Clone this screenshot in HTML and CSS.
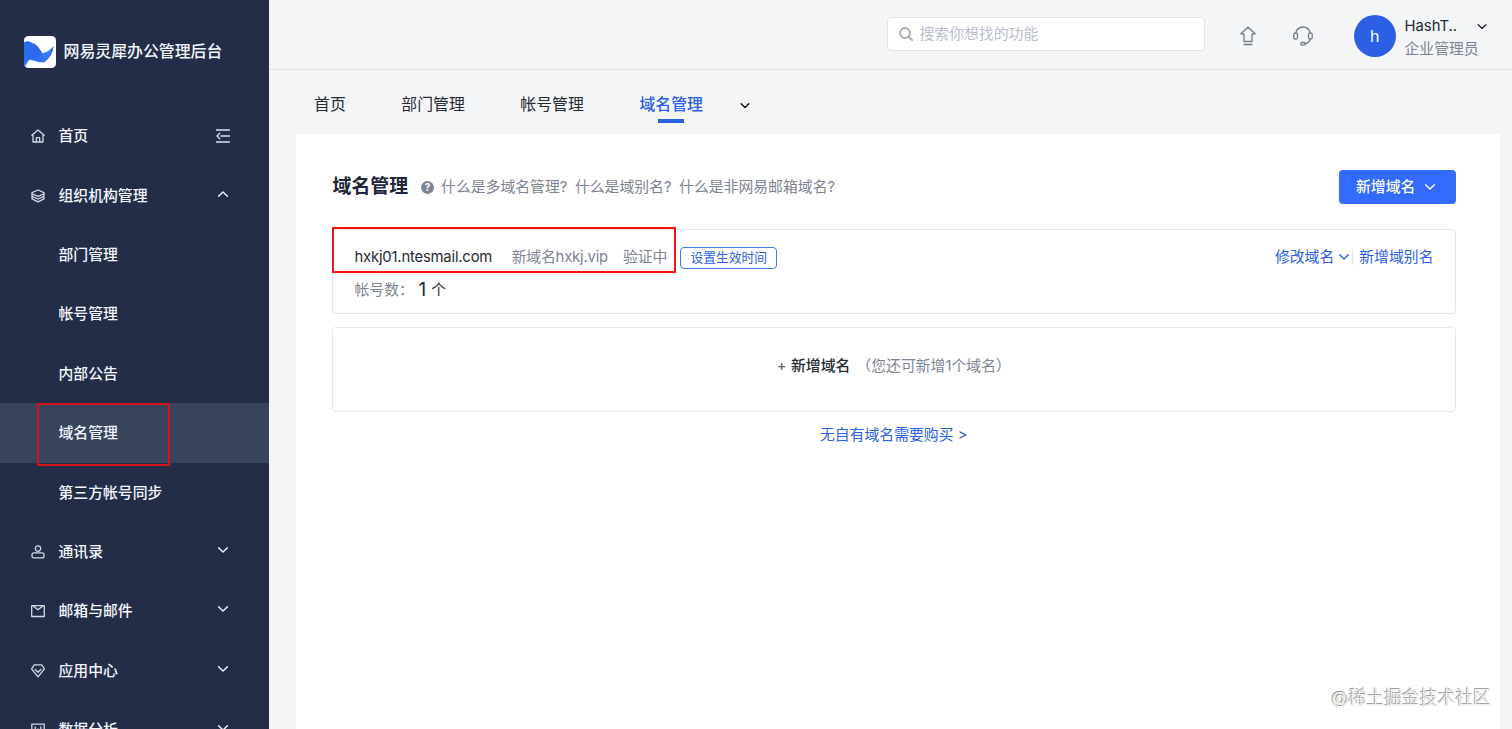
FILE: index.html
```html
<!DOCTYPE html>
<html lang="zh-CN">
<head>
    <meta charset="UTF-8">
    <meta name="viewport" content="width=device-width, initial-scale=1.0">
    <title>网易灵犀办公管理后台</title>
    <link rel="stylesheet" href="styles.css">
</head>
<body>
    <aside class="sidebar">
        <div class="brand">
            <svg class="logo" viewBox="0 0 32 32">
                <defs>
                    <linearGradient id="wing" x1="0" y1="0" x2="1" y2="1">
                        <stop offset="0" stop-color="#2458e0"/>
                        <stop offset="1" stop-color="#3b82ff"/>
                    </linearGradient>
                </defs>
                <rect width="32" height="32" rx="4.5" fill="#fff"/>
                <path d="M0 6.5Q2.5 4.5 5 5.5L11 8 6.500 23.5Q3 25 1.5 30.500L0 28z" fill="#2c6cf0"/>
                <path d="M10.500 7.800Q15 11 18.500 17.500L24 15.500 29.500 10.500Q28.500 20 20 26.500Q12 26 6 23.500z" fill="url(#wing)"/>
                <path d="M18.500 17.500L24 15.500 29.500 10.500Q28.500 20 20 26.500z" fill="#3478f8"/>
            </svg>
            <span>网易灵犀办公管理后台</span>
        </div>
        <nav class="menu">
            <a class="item">
                <svg class="icon" viewBox="0 0 14 14"><path d="M.8 6.200L7 1l6.200 5.200M2 5.400V13h10V5.400M5.300 13V9.300q0-.6.600-.6h2.200q.6 0 .6.600V13"/></svg>
                <span>首页</span>
                <svg class="fold" viewBox="0 0 14 14"><path d="M.5 1h13M5 7h8.500M.5 13h13M3.800 4.300L1 7l2.800 2.700"/></svg>
            </a>
            <a class="item">
                <svg class="icon" viewBox="0 0 14 14"><path d="M7 1l6 2.600v1.200L7 7.400 1 4.800V3.600zM1 5v2.300L7 10l6-2.700V5M1 7.500v2.400l6 2.900 6-2.900V7.500"/></svg>
                <span>组织机构管理</span>
                <svg class="arrow" viewBox="0 0 10 6"><path d="M.6 5.200L5 1l4.400 4.200"/></svg>
            </a>
            <a class="item sub">部门管理</a>
            <a class="item sub">帐号管理</a>
            <a class="item sub">内部公告</a>
            <a class="item sub active">域名管理<i class="mark"></i></a>
            <a class="item sub">第三方帐号同步</a>
            <a class="item">
                <svg class="icon" viewBox="0 0 14 14"><circle cx="7" cy="3.600" r="2.700"/><rect x="1" y="7.800" width="12" height="5" rx="1.900"/></svg>
                <span>通讯录</span>
                <svg class="arrow" viewBox="0 0 10 6"><path d="M.6.800L5 5 9.400.800"/></svg>
            </a>
            <a class="item">
                <svg class="icon" viewBox="0 0 14 14"><path d="M.7 1.700h12.600v10.800H.700zM2.500 2.200L7 5.700l4.500-3.500"/></svg>
                <span>邮箱与邮件</span>
                <svg class="arrow" viewBox="0 0 10 6"><path d="M.6.800L5 5 9.400.800"/></svg>
            </a>
            <a class="item">
                <svg class="icon" viewBox="0 0 14 14"><path d="M3.300.800h7.400l2.700 4L7 12.800.600 4.800zM4.200 5.500L7 8.300l2.800-2.800"/></svg>
                <span>应用中心</span>
                <svg class="arrow" viewBox="0 0 10 6"><path d="M.6.800L5 5 9.400.800"/></svg>
            </a>
            <a class="item">
                <svg class="icon" viewBox="0 0 14 14"><path d="M.8 1.200h12.400v11.500H.800zM4.200 4v6M7 6v4M9.800 4v6"/></svg>
                <span>数据分析</span>
                <svg class="arrow" viewBox="0 0 10 6"><path d="M.6.800L5 5 9.400.800"/></svg>
            </a>
        </nav>
    </aside>

    <div class="page">
        <header class="topbar">
            <div class="search">
                <svg viewBox="0 0 14 14"><circle cx="6" cy="6" r="4.900"/><path d="M9.600 9.600l3.700 3.600"/></svg>
                <span>搜索你想找的功能</span>
            </div>
            <svg class="tool upload" viewBox="0 0 16 20"><path d="M8 1.200L15.200 7.800H12v7.700H4V7.800H.800zM4 18.500h8"/></svg>
            <svg class="tool service" viewBox="0 0 20 20"><path d="M2.800 7Q4.300 1 10 1t7.200 6M17.200 13Q16 17 12.300 17.800"/><rect x=".8" y="6.800" width="3.700" height="6.400" rx="1.800"/><rect x="15.500" y="6.800" width="3.700" height="6.400" rx="1.800"/><rect x="7.800" y="16.500" width="4.500" height="2.600" rx="1.300"/></svg>
            <div class="avatar">h</div>
            <div class="user">
                <div class="name">HashT..<svg class="arrow" viewBox="0 0 10 6"><path d="M1.200.800L5 4.600 8.800.800"/></svg></div>
                <div class="role">企业管理员</div>
            </div>
        </header>

        <div class="tabs">
            <a>首页</a>
            <a>部门管理</a>
            <a>帐号管理</a>
            <a class="current">域名管理</a>
            <svg class="arrow" viewBox="0 0 10 6"><path d="M1.200.800L5 4.600 8.800.800"/></svg>
        </div>

        <main class="content">
            <div class="title-row">
                <h1>域名管理</h1>
                <span class="help">?</span>
                <div class="faq"><a>什么是多域名管理?</a><a>什么是域别名?</a><a>什么是非网易邮箱域名?</a></div>
                <button class="add-btn">新增域名<svg class="arrow" viewBox="0 0 10 6"><path d="M.6.800L5 5 9.400.800"/></svg></button>
            </div>

            <section class="card domain">
                <i class="mark"></i>
                <div class="line">
                    <span class="host">hxkj01.ntesmail.com</span>
                    <span class="pending">新域名hxkj.vip</span>
                    <span class="status">验证中</span>
                    <span class="tag">设置生效时间</span>
                    <div class="ops">
                        <a>修改域名<svg class="arrow" viewBox="0 0 10 6"><path d="M.6.800L5 5 9.400.800"/></svg></a>
                        <a>新增域别名</a>
                    </div>
                </div>
                <div class="count"><span>帐号数：</span><b>1</b>个</div>
            </section>

            <section class="card add">
                <span class="plus">+</span>
                <span class="label">新增域名</span>
                <span class="tip">（您还可新增1个域名）</span>
            </section>

            <a class="buy">无自有域名需要购买 &gt;</a>
        </main>
    </div>
    <div class="watermark">@稀土掘金技术社区</div>
</body>
</html>
```

FILE: styles.css
```css
* {box-sizing: border-box;}
body {
    margin: 0;
    display: flex;
    height: 100vh;
    overflow: hidden;
    background: #f4f5f7;
    color: #262a33;
    font-family: Inter, "Noto Sans CJK SC", sans-serif;
    font-size: 14.85px;
    line-height: 22px;
    white-space: nowrap;
}
svg {display: block; flex: none; fill: none; stroke: currentColor; stroke-linecap: round; stroke-linejoin: round;}
h1 {margin: 0;}
.arrow {width: 10px; height: 6px; stroke-width: 1.4;}
.mark {position: absolute; border: 2px solid #f01414; z-index: 1;}

/* sidebar */
.sidebar {width: 268.5px; flex: none; height: 100vh; overflow: hidden; background: #232d47; color: #f4f7ff;}
.brand {display: flex; align-items: center; gap: 7.5px; height: 106.5px; padding: 0 0 3px 24px; font-size: 15.9px; font-weight: 500;}
.logo {width: 32px; height: 32px; stroke: none;}
.menu {font-weight: 500;}
.item {position: relative; display: flex; align-items: center; height: 59.4px; padding: 0 38px 0 31px;}
.item span {flex: 1;}
.item.sub {padding-left: 58.5px;}
.item.active {background: #38445c;}
.item .icon {width: 14px; height: 14px; margin-right: 13.5px; color: #d3d9e6; stroke-width: 1.3;}
.item .fold {width: 14px; height: 14px; margin-right: 1px; color: #dce2f0; stroke-width: 1.3;}
.item .arrow {margin: 0 2.5px 4px 0;}
.item .mark {left: 37px; top: 0; width: 132.5px; height: 63px; border-color: #d3141c;}

/* top bar */
.page {flex: 1; display: flex; flex-direction: column; min-width: 0;}
.topbar {display: flex; align-items: center; justify-content: flex-end; height: 70px; padding-right: 25.5px; border-bottom: 1px solid #e1e3e6;}
.search {display: flex; align-items: center; gap: 7px; width: 318px; height: 34px; margin: 0 35px 2px 0; padding-left: 11px; background: #fff; border: 1px solid #e2e4e9; border-radius: 4px; color: #b9bdcc;}
.search svg {width: 14px; height: 14px; color: #aeaeae; stroke-width: 2;}
.tool {color: #747a88; stroke-width: 1.3; margin-top: 2px;}
.upload {width: 16px; height: 20px; margin-right: 37px;}
.service {width: 20px; height: 20px; margin-right: 41px;}
.avatar {width: 42.5px; height: 42.5px; margin: 3px 8.5px 0 0; border-radius: 50%; background: #2b60e4; color: #fff; font-size: 16px; line-height: 43px; text-align: center;}
.user {width: 82px; margin-top: 4px;}
.name {display: flex; align-items: center; justify-content: space-between;}
.name .arrow {margin-top: 2px;}
.role {padding-top: 1px; margin-bottom: -1px; color: #7d8391;}

/* tabs */
.tabs {display: flex; align-items: center; gap: 55.5px; height: 64px; padding: 5px 0 0 45.5px; font-size: 15.9px;}
.tabs a {position: relative; height: 24px; line-height: 24px;}
.tabs .current {color: #2b60e4; font-weight: 500;}
.tabs .current::after {content: ""; position: absolute; left: 19px; bottom: -6px; width: 26px; height: 4px; background: #2b60e4;}
.tabs .arrow {margin: 2px 0 0 -18px; color: #111;}

/* content */
.content {flex: 1; margin: 0 12px 0 27px; padding: 36px 44.5px 0 36.5px; background: #fff;}
.title-row {display: flex; align-items: center; height: 34px; padding-left: .5px;}
.title-row h1 {font-size: 18.9px; font-weight: 700; color: #20263a;}
.help {width: 13px; height: 13px; margin: 0 7px 0 13px; border-radius: 50%; background: #7e8494; color: #fff; font-size: 10px; font-weight: 700; line-height: 13px; text-align: center;}
.faq {display: flex; gap: 7.5px; color: #7d8391;}
.add-btn {display: flex; align-items: center; gap: 10px; width: 117px; height: 34px; margin-left: auto; padding: 0 0 0 17.5px; border: 0; border-radius: 4px; background: #326bfd; color: #fff; font: inherit; font-weight: 500;}
.card {position: relative; height: 85px; border: 1px solid #e6e7ea; border-radius: 4px;}
.domain {margin-top: 25px; padding: 15px 21px 0 21.5px;}
.domain .mark {left: -1px; top: -3px; width: 344px; height: 46px;}
.line {display: flex; align-items: center; height: 23px; color: #7d8391;}
.host {color: #262a33; margin-right: 19.5px; letter-spacing: -.2px;}
.pending {margin-right: 15px; letter-spacing: -.2px;}
.tag {height: 22px; margin: 3px 0 0 13px; padding: 0 9px; border: 1px solid #4b79e8; border-radius: 4px; color: #2b60e4; font-size: 12.75px; line-height: 20px;}
.ops {display: flex; align-items: center; margin-left: auto; color: #2b60e4;}
.ops a {display: flex; align-items: center; gap: 5px;}
.ops a + a {margin-left: 3px; padding-left: 6px; border-left: 1px solid #e1e3e8; line-height: 16px;}
.count {display: flex; align-items: center; height: 22px; margin-top: 10.5px;}
.count span {color: #7d8391; width: 64px;}
.count b {margin-right: 5px; font-size: 19px; font-weight: 400;}
.add {display: flex; justify-content: center; margin-top: 12.5px; padding-top: 27px;}
.plus {margin-right: 4.5px; color: #555b69;}
.label {font-weight: 500; margin-right: 6px;}
.tip {color: #7d8391;}
.buy {display: block; margin-top: 12.5px; color: #2b60e4; text-align: center;}

.watermark {position: absolute; right: 21px; bottom: 18px; color: #fff; font-size: 17.8px; font-weight: 300; line-height: 26px; text-shadow: 0 0 1px #777, -1px -1px 0 #999;}
```
